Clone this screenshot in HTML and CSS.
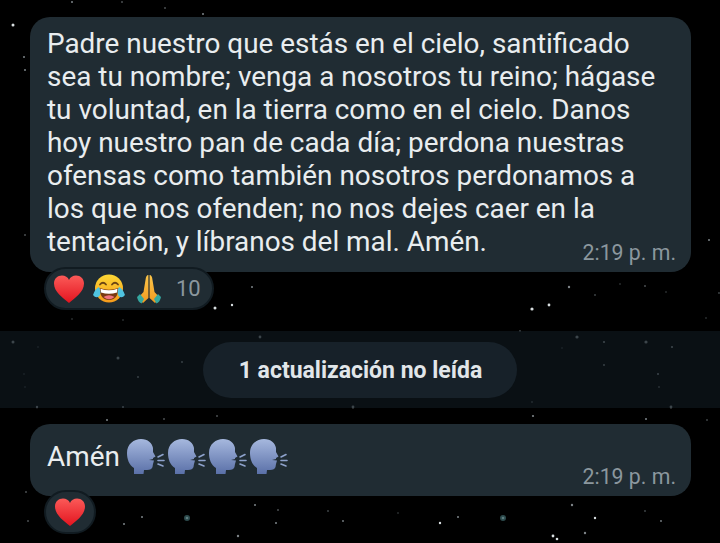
FILE: index.html
```html
<!DOCTYPE html>
<html lang="es">
<head>
  <meta charset="UTF-8">
  <title>Chat</title>
  <link rel="stylesheet" href="styles.css">
</head>
<body>
  <svg class="stars" width="720" height="543" viewBox="0 0 720 543">
    <g fill="#d8dee0">
      <circle cx="13" cy="25" r="1.5"/><circle cx="532" cy="309" r="1.6"/><circle cx="549" cy="305" r="1.4"/>
      <circle cx="215" cy="308" r="1.5"/><circle cx="232" cy="305" r="1.2"/><circle cx="553" cy="536" r="1.4"/>
      <circle cx="557" cy="539" r="1.3"/><circle cx="595" cy="518" r="1.2"/><circle cx="440" cy="523" r="1.2"/>
    </g>
    <g fill="#7d8488">
      <circle cx="24" cy="57" r="1"/><circle cx="25" cy="70" r="1"/><circle cx="72" cy="2" r="1"/>
      <circle cx="122" cy="2" r=".8"/><circle cx="165" cy="8" r=".8"/><circle cx="203" cy="14" r="1"/>
      <circle cx="569" cy="287" r="1.2"/><circle cx="645" cy="286" r=".8"/><circle cx="709" cy="240" r="1"/>
      <circle cx="577" cy="337" r="1.6"/><circle cx="252" cy="287" r="1"/><circle cx="25" cy="235" r=".8"/>
      <circle cx="238" cy="536" r="1.2"/><circle cx="124" cy="524" r="1"/><circle cx="142" cy="517" r="1"/>
      <circle cx="255" cy="505" r="1"/><circle cx="276" cy="523" r="1"/><circle cx="278" cy="510" r=".8"/>
      <circle cx="26" cy="492" r=".8"/><circle cx="28" cy="521" r=".8"/><circle cx="107" cy="420" r="1"/>
      <circle cx="164" cy="419" r=".8"/><circle cx="217" cy="416" r=".8"/><circle cx="260" cy="337" r="1.4"/>
      <circle cx="353" cy="407" r="1.4"/><circle cx="13" cy="342" r="1.5"/><circle cx="118" cy="358" r="1.5"/>
      <circle cx="182" cy="362" r=".9"/><circle cx="138" cy="377" r=".9"/><circle cx="37" cy="407" r="1.2"/>
      <circle cx="123" cy="407" r="1"/><circle cx="604" cy="342" r="1.1"/><circle cx="646" cy="342" r="1.6"/>
      <circle cx="672" cy="347" r="1.1"/><circle cx="604" cy="365" r=".9"/><circle cx="658" cy="374" r="1"/>
      <circle cx="659" cy="387" r=".8"/><circle cx="533" cy="416" r="1.1"/><circle cx="671" cy="407" r="1.4"/>
      <circle cx="646" cy="419" r="1"/><circle cx="572" cy="505" r="1.2"/><circle cx="585" cy="533" r="1.2"/>
      <circle cx="458" cy="517" r="1"/><circle cx="343" cy="521" r=".9"/><circle cx="661" cy="521" r=".9"/>
    </g>
    <g fill="#43494c">
      <circle cx="38" cy="347" r=".8"/><circle cx="24" cy="374" r=".8"/><circle cx="25" cy="387" r=".8"/>
      <circle cx="72" cy="319" r=".8"/><circle cx="123" cy="320" r=".8"/><circle cx="595" cy="295" r=".9"/>
      <circle cx="620" cy="284" r=".8"/><circle cx="666" cy="292" r=".8"/><circle cx="719" cy="293" r=".9"/>
      <circle cx="706" cy="318" r=".8"/><circle cx="520" cy="331" r=".9"/><circle cx="562" cy="348" r=".8"/>
      <circle cx="532" cy="402" r=".9"/><circle cx="707" cy="420" r=".9"/><circle cx="328" cy="511" r=".9"/>
      <circle cx="398" cy="513" r=".8"/><circle cx="645" cy="511" r=".9"/>
    </g>
    <circle cx="503" cy="518" r="3" fill="#2c4a4c"/><circle cx="503" cy="518" r="1.3" fill="#5d7c7e"/>
    <circle cx="187" cy="518" r="3" fill="#2c4a4c"/><circle cx="187" cy="518" r="1.3" fill="#5d7c7e"/>
  </svg>

  <main class="chat">
    <div class="msg">
      <div class="bubble">
        <p class="text">Padre nuestro que estás en el cielo, santificado<br>sea tu nombre; venga a nosotros tu reino; hágase<br>tu voluntad, en la tierra como en el cielo. Danos<br>hoy nuestro pan de cada día; perdona nuestras<br>ofensas como también nosotros perdonamos a<br>los que nos ofenden; no nos dejes caer en la<br>tentación, y líbranos del mal. Amén.</p>
        <span class="time">2:19 p. m.</span>
      </div>
      <div class="reactions">
        <svg class="emoji" viewBox="0 0 32 32"><use href="#heart"/></svg>
        <svg class="emoji" viewBox="0 0 32 32"><use href="#joy"/></svg>
        <svg class="emoji" viewBox="0 0 32 32"><use href="#pray"/></svg>
        <span class="count">10</span>
      </div>
    </div>

    <div class="unread"><span class="pill">1 actualización no leída</span></div>

    <div class="msg">
      <div class="bubble short">
        <p class="text">Amén <span class="heads">
          <svg class="head" viewBox="0 0 41 35"><use href="#speak"/></svg><svg class="head" viewBox="0 0 41 35"><use href="#speak"/></svg><svg class="head" viewBox="0 0 41 35"><use href="#speak"/></svg><svg class="head" viewBox="0 0 41 35"><use href="#speak"/></svg>
        </span></p>
        <span class="time">2:19 p. m.</span>
      </div>
      <div class="reactions single">
        <svg class="emoji" viewBox="0 0 32 32"><use href="#heart"/></svg>
      </div>
    </div>
  </main>

  <svg class="defs" width="0" height="0">
    <defs>
      <linearGradient id="heartFill" x1="0" y1="0" x2="0" y2="1"><stop offset="0" stop-color="#fb5a58"/><stop offset="1" stop-color="#e3141f"/></linearGradient>
      <linearGradient id="faceFill" x1="0" y1="0" x2="0" y2="1"><stop offset="0" stop-color="#fdd835"/><stop offset="1" stop-color="#f59a1b"/></linearGradient>
      <linearGradient id="handFill" x1="0" y1="0" x2="0" y2="1"><stop offset="0" stop-color="#fcc64a"/><stop offset="1" stop-color="#f19a20"/></linearGradient>
      <linearGradient id="headFill" x1="0" y1="0" x2="0" y2="1"><stop offset="0" stop-color="#a6b8de"/><stop offset="1" stop-color="#5a70a8"/></linearGradient>
      <symbol id="heart" viewBox="0 0 32 32">
        <path fill="url(#heartFill)" d="M16 30 C10 25 1 19 1 10.500 C1 5.500 4.500 2.500 9 2.500 C12 2.500 15 4 16 7 C17 4 20 2.500 23 2.500 C27.500 2.500 31 5.500 31 10.500 C31 19 22 25 16 30 Z"/>
      </symbol>
      <symbol id="joy" viewBox="0 0 32 32">
        <circle cx="16" cy="15.500" r="14" fill="url(#faceFill)"/>
        <path fill="none" stroke="#6b4513" stroke-width="1.800" stroke-linecap="round" d="M7 11.500 Q10 8 13 11.500 M19 11.500 Q22 8 25 11.500"/>
        <path fill="#7a3a12" d="M6.500 15 Q16 18.500 25.500 15 Q25 27 16 27 Q7 27 6.500 15 Z"/>
        <path fill="#fff" d="M7.500 15.800 Q16 18.800 24.500 15.800 L24 19.500 Q16 22 8 19.500 Z"/>
        <path fill="#f0737e" d="M10.500 24 Q16 20.500 21.500 24 Q16 28.500 10.500 24 Z"/>
        <path fill="#4fc3e0" d="M0 22 Q2 16 6 14 Q8.500 19 6.500 23 Q3 26 0 22 Z M32 22 Q30 16 26 14 Q23.500 19 25.500 23 Q29 26 32 22 Z"/>
      </symbol>
      <symbol id="pray" viewBox="0 0 32 32">
        <path fill="url(#handFill)" d="M15.400 2 Q13 2 12.500 7 L10.500 19 L5 25 L10 30 L15.400 25 Z M16.600 2 Q19 2 19.500 7 L21.500 19 L27 25 L22 30 L16.600 25 Z"/>
        <path fill="#35a8a0" d="M4 24 L7 21 L11 26 L8.500 30.500 Q5 29 4 24 Z M28 24 L25 21 L21 26 L23.500 30.500 Q27 29 28 24 Z"/>
      </symbol>
      <symbol id="speak" viewBox="0 0 41 35">
        <path fill="url(#headFill)" d="M7 35 L7 29 C2 26 0 20 0 14 C0 5 7 0 14 0 C21 0 25 4 26 9 L26 13 L28.500 17.500 L26 19 L26 20 L22 21 L27 21.500 L26 25 L25.500 28 C25 30 23 31 20 31 L17 31 L16.500 35 Z"/>
        <path fill="none" stroke="#8ea2cc" stroke-width="1.600" stroke-linecap="round" d="M31 18 L36 15.500 M31 21.500 L37 21.500 M31 25 L36 27"/>
      </symbol>
    </defs>
  </svg>
</body>
</html>
```

FILE: styles.css
```css
body {
  margin: 0;
  height: 543px;
  overflow: hidden;
  position: relative;
  background-color: #000;
  font-family: Roboto, "Liberation Sans", sans-serif;
  color: #e9edef;
}

.stars {
  position: absolute;
  top: 0;
  left: 0;
  filter: blur(0.4px);
}

.defs {
  position: absolute;
}

.chat {
  position: relative;
  display: flex;
  flex-direction: column;
  padding-top: 17px;
}

.msg {
  display: flex;
  flex-direction: column;
  align-items: flex-start;
  padding-left: 30px;
}

.bubble {
  position: relative;
  box-sizing: border-box;
  width: 661px;
  height: 255px;
  padding: 10px 17px;
  background-color: #202c33;
  border-radius: 20px;
}

.bubble.short {
  height: 72px;
  padding-top: 15px;
}

.text {
  margin: 0;
  font-size: 27.9px;
  line-height: 33px;
}

.time {
  position: absolute;
  right: 15px;
  bottom: 6px;
  font-size: 21.3px;
  line-height: 26px;
  color: #8b979e;
}

.reactions {
  display: flex;
  align-items: center;
  box-sizing: border-box;
  height: 43px;
  margin: -5px 0 0 14px;
  padding: 0 11px 0 7px;
  background-color: #202c33;
  border: 2px solid #111b21;
  border-radius: 22px;
  position: relative;
}

.reactions.single {
  height: 44px;
  width: 52px;
  margin-top: -6px;
  justify-content: center;
  padding: 0;
}

.emoji {
  width: 32px;
  height: 32px;
  margin-right: 8px;
}

.reactions.single .emoji {
  margin-right: 0;
}

.count {
  margin-left: 3px;
  font-size: 22px;
  color: #8b979e;
}

.unread {
  display: flex;
  justify-content: center;
  align-items: center;
  height: 77px;
  margin: 21px 0 16px;
  background-color: rgba(17, 27, 33, 0.6);
}

.pill {
  display: flex;
  align-items: center;
  box-sizing: border-box;
  height: 56px;
  padding: 2px 35px 0 36px;
  background-color: #172129;
  border-radius: 28px;
  font-size: 23px;
  font-weight: 700;
  color: #e1e6e9;
}

.heads {
  display: inline-flex;
  vertical-align: -8px;
}

.head {
  width: 41px;
  height: 35px;
}
```
